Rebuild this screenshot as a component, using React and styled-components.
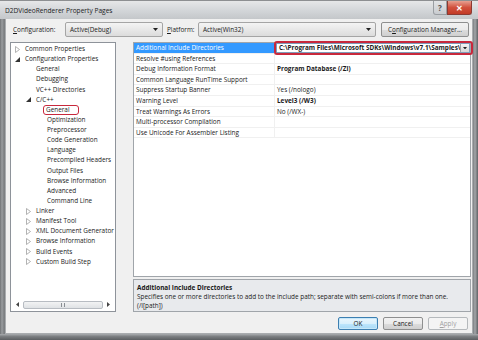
import React from 'react'
import styled, { createGlobalStyle, css } from 'styled-components'

const GlobalStyle = createGlobalStyle`
  html, body { margin: 0; padding: 0; background: #6e6e6e; }
  body { font-family: "Open Sans", "Noto Sans", "Liberation Sans", sans-serif; }
  * { box-sizing: border-box; }
`

const tree = [
  { label: 'Common Properties', level: 0, arrow: 'closed' },
  { label: 'Configuration Properties', level: 0, arrow: 'open' },
  { label: 'General', level: 1 },
  { label: 'Debugging', level: 1 },
  { label: 'VC++ Directories', level: 1 },
  { label: 'C/C++', level: 1, arrow: 'open' },
  { label: 'General', level: 2, marked: true },
  { label: 'Optimization', level: 2 },
  { label: 'Preprocessor', level: 2 },
  { label: 'Code Generation', level: 2 },
  { label: 'Language', level: 2 },
  { label: 'Precompiled Headers', level: 2 },
  { label: 'Output Files', level: 2 },
  { label: 'Browse Information', level: 2 },
  { label: 'Advanced', level: 2 },
  { label: 'Command Line', level: 2 },
  { label: 'Linker', level: 1, arrow: 'closed' },
  { label: 'Manifest Tool', level: 1, arrow: 'closed' },
  { label: 'XML Document Generator', level: 1, arrow: 'closed' },
  { label: 'Browse Information', level: 1, arrow: 'closed' },
  { label: 'Build Events', level: 1, arrow: 'closed' },
  { label: 'Custom Build Step', level: 1, arrow: 'closed' },
]

const props = [
  { name: 'Additional Include Directories', value: 'C:\\Program Files\\Microsoft SDKs\\Windows\\v7.1\\Samples\\', selected: true },
  { name: 'Resolve #using References', value: '' },
  { name: 'Debug Information Format', value: 'Program Database (/Zi)', bold: true },
  { name: 'Common Language RunTime Support', value: '' },
  { name: 'Suppress Startup Banner', value: 'Yes (/nologo)' },
  { name: 'Warning Level', value: 'Level3 (/W3)', bold: true },
  { name: 'Treat Warnings As Errors', value: 'No (/WX-)' },
  { name: 'Multi-processor Compilation', value: '' },
  { name: 'Use Unicode For Assembler Listing', value: '' },
]

const Window = styled.div`
  width: 478px;
  height: 340px;
  display: flex;
  flex-direction: column;
  background: linear-gradient(90deg, #6f7275 0, #9a9da0 2px, #7c7f82 4px, #7c7f82 calc(100% - 5px), #a3a6a9 calc(100% - 3px), #5f6265 100%);
  overflow: hidden;
  font-size: 6.4px;
  color: #1a1a1a;
`

const TitleBar = styled.div`
  height: 19px;
  flex: none;
  display: flex;
  align-items: center;
  padding: 0 6px 0 5px;
  background: linear-gradient(#e6e7e8, #d2d5d8 55%, #c4c7ca);
  border-top: 1px solid #8d8f91;
`

const Title = styled.div`
  flex: 1;
  font-size: 6.6px;
  color: #222;
`

const CaptionButtons = styled.div`
  display: flex;
  align-self: flex-start;
`

const CaptionButton = styled.div`
  width: ${p => (p.$close ? 25 : 14)}px;
  height: 14px;
  display: flex;
  align-items: center;
  justify-content: center;
  border: 1px solid ${p => (p.$close ? '#8b3a33' : '#9a9ea2')};
  border-top: none;
  border-radius: 0 0 ${p => (p.$close ? '3px 0' : '0 3px')};
  background: ${p =>
    p.$close ? 'linear-gradient(#e7a091, #d1503d 50%, #c23a26)' : 'linear-gradient(#e2e4e6, #c9ccd0)'};
  color: ${p => (p.$close ? '#fff' : '#555')};
  font-size: 8px;
  font-weight: bold;
`

const Body = styled.div`
  flex: 1;
  display: flex;
  flex-direction: column;
  background: #f0f0f0;
  margin: 0 5px;
  padding: 3px 3px 3px 4px;
  border: 1px solid #a9acaf;
  border-top: none;
`

const BottomFrame = styled.div`
  height: 6px;
  flex: none;
  background: linear-gradient(#a9acaf, #7c7f82 40%, #5c5f62);
`

const ConfigRow = styled.div`
  height: 15px;
  display: flex;
  align-items: center;
  flex: none;
`

const Label = styled.span`
  width: ${p => p.$w}px;
  padding-left: ${p => p.$pad || 0}px;
  flex: none;
  u { text-decoration: underline; }
`

const Combo = styled.div`
  width: ${p => p.$w}px;
  height: 15px;
  flex: none;
  display: flex;
  align-items: center;
  justify-content: space-between;
  padding: 0 4px;
  border: 1px solid #a5a5a5;
  border-radius: 2px;
  background: linear-gradient(#f4f4f4, #e8e8e8 50%, #dcdcdc);
`

const Button = styled.div`
  height: ${p => p.$h || 13}px;
  width: ${p => p.$w}px;
  flex: none;
  display: flex;
  align-items: center;
  justify-content: center;
  border: 1px solid #8e8f8f;
  border-radius: 2px;
  background: linear-gradient(#f2f2f2, #ebebeb 50%, #dddddd 51%, #cfcfcf);
  ${p => p.$default && css`
    border-color: #3c7fb1;
    background: linear-gradient(#eaf6fd, #d9f0fc 50%, #bee6fd 51%, #a7d9f5);
    box-shadow: inset 0 0 0 1px #c6e7f9;
  `}
  ${p => p.$disabled && css`
    border-color: #b5b9bc;
    background: #f4f4f4;
    color: #a0a0a0;
  `}
`

const Main = styled.div`
  flex: 1;
  display: flex;
  gap: 17px;
  margin-top: 5px;
  min-height: 0;
`

const TreePanel = styled.div`
  width: 106px;
  flex: none;
  display: flex;
  flex-direction: column;
  border: 1px solid #8e939a;
  background: #fff;
`

const TreeList = styled.div`
  flex: 1;
  padding-top: 1px;
  overflow: hidden;
`

const TreeItem = styled.div`
  height: 10.13px;
  line-height: 10.13px;
  display: flex;
  align-items: center;
  padding-left: ${p => 4 + p.$level * 11}px;
  white-space: nowrap;
`

const ArrowBox = styled.span`
  width: 9px;
  flex: none;
  display: flex;
  align-items: center;
`

const TreeText = styled.span`
  padding: 0 1px;
  ${p => p.$marked && css`
    outline: 1.5px solid #c8283c;
    border-radius: 2px;
    padding: 0 8px 0 2px;
    margin-left: -2px;
    line-height: 8px;
  `}
`

const HScroll = styled.div`
  height: 9px;
  margin: 0 2px 2px;
  display: flex;
  align-items: center;
`

const ScrollArrow = styled.div`
  width: 9px;
  display: flex;
  justify-content: center;
`

const ScrollTrack = styled.div`
  flex: 1;
  height: 8px;
  display: flex;
  justify-content: center;
  align-items: center;
  border: 1px solid #b7bcc2;
  border-radius: 2px;
  background: linear-gradient(#f2f3f4, #dfe2e5);
  margin: 0 1px;
`

const Grip = styled.span`
  width: 4px;
  height: 4px;
  border-left: 1px solid #8a8f94;
  border-right: 1px solid #8a8f94;
`

const RightCol = styled.div`
  flex: 1;
  display: flex;
  flex-direction: column;
  gap: 2px;
`

const Grid = styled.div`
  flex: 1;
  border: 1px solid #a0a5aa;
  background: #fff;
`

const Row = styled.div`
  height: 10.6px;
  display: flex;
  border-bottom: 1px solid #f0f0f0;
`

const NameCell = styled.div`
  width: 141px;
  flex: none;
  padding-left: 2px;
  line-height: 10px;
  white-space: nowrap;
  border-right: 1px solid #f0f0f0;
  ${p => p.$selected && css`
    background: #3399ff;
    color: #fff;
  `}
`

const ValueCell = styled.div`
  flex: 1;
  position: relative;
  padding-left: 2px;
  line-height: 10px;
  white-space: nowrap;
  font-weight: ${p => (p.$bold ? 700 : 400)};
`

const EditBox = styled.div`
  display: flex;
  align-items: center;
  justify-content: space-between;
  height: 10px;
  margin-left: -1px;
  padding-left: 2px;
  font-weight: 700;
  border: 1px solid #7f9db9;
  background: #fff;
  overflow: hidden;
`

const DropBtn = styled.span`
  width: 9px;
  height: 8px;
  flex: none;
  display: flex;
  align-items: center;
  justify-content: center;
  background: linear-gradient(#f4f4f4, #d6d6d6);
  border-left: 1px solid #a0a0a0;
`

const Annotation = styled.div`
  position: absolute;
  left: -1px;
  right: -3px;
  top: -2px;
  bottom: -2px;
  border: 2px solid #c8283c;
  border-radius: 3px;
  pointer-events: none;
`

const Description = styled.div`
  height: 33px;
  flex: none;
  border: 1px solid #a0a5aa;
  background: #e8eaed;
  padding: 3px 3px 0;
  line-height: 9px;
`

const DescTitle = styled.div`
  font-weight: 700;
`

const ButtonRow = styled.div`
  display: flex;
  justify-content: flex-end;
  gap: 5px;
  margin-top: 5px;
  padding-right: 1px;
  flex: none;
`

const Triangle = ({ open }) =>
  open ? (
    <svg width="5" height="5" viewBox="0 0 5 5"><path d="M5 0 L5 5 L0 5 Z" fill="#333" /></svg>
  ) : (
    <svg width="5" height="7" viewBox="0 0 5 7"><path d="M0.5 0.5 L4.5 3.5 L0.5 6.5 Z" fill="#fff" stroke="#a0a0a0" strokeWidth="0.8" /></svg>
  )

const DownArrow = ({ size = 5 }) => (
  <svg width={size} height={size / 2 + 0.5} viewBox="0 0 6 3.5"><path d="M0 0 L6 0 L3 3.5 Z" fill="#222" /></svg>
)

const SideArrow = ({ left }) => (
  <svg width="3" height="5" viewBox="0 0 3 5">
    <path d={left ? 'M3 0 L0 2.5 L3 5 Z' : 'M0 0 L3 2.5 L0 5 Z'} fill="#444" />
  </svg>
)

export default function App() {
  return (
    <>
      <GlobalStyle />
      <Window>
        <TitleBar>
          <Title>D2DVideoRenderer Property Pages</Title>
          <CaptionButtons>
            <CaptionButton>?</CaptionButton>
            <CaptionButton $close>✕</CaptionButton>
          </CaptionButtons>
        </TitleBar>
        <Body>
          <ConfigRow>
            <Label $w={55} $pad={3}><u>C</u>onfiguration:</Label>
            <Combo $w={98}>Active(Debug)<DownArrow /></Combo>
            <Label $w={35} $pad={4}><u>P</u>latform:</Label>
            <Combo $w={178}>Active(Win32)<DownArrow /></Combo>
            <span style={{ flex: 1 }} />
            <Button $w={88} $h={15}>C<u>o</u>nfiguration Manager...</Button>
          </ConfigRow>
          <Main>
            <TreePanel>
              <TreeList>
                {tree.map((t, i) => (
                  <TreeItem key={i} $level={t.level}>
                    <ArrowBox>{t.arrow && <Triangle open={t.arrow === 'open'} />}</ArrowBox>
                    <TreeText $marked={t.marked}>{t.label}</TreeText>
                  </TreeItem>
                ))}
              </TreeList>
              <HScroll>
                <ScrollArrow><SideArrow left /></ScrollArrow>
                <ScrollTrack><Grip /></ScrollTrack>
                <ScrollArrow><SideArrow /></ScrollArrow>
              </HScroll>
            </TreePanel>
            <RightCol>
              <Grid>
                {props.map((p, i) => (
                  <Row key={i}>
                    <NameCell $selected={p.selected}>{p.name}</NameCell>
                    <ValueCell $bold={p.bold}>
                      {p.selected ? (
                        <>
                          <EditBox>{p.value}<DropBtn><DownArrow size={4} /></DropBtn></EditBox>
                          <Annotation />
                        </>
                      ) : p.value}
                    </ValueCell>
                  </Row>
                ))}
              </Grid>
              <Description>
                <DescTitle>Additional Include Directories</DescTitle>
                <div>Specifies one or more directories to add to the include path; separate with semi-colons if more than one.</div>
                <div>(/I[path])</div>
              </Description>
            </RightCol>
          </Main>
          <ButtonRow>
            <Button $w={40} $default>OK</Button>
            <Button $w={40}>Cancel</Button>
            <Button $w={40} $disabled><u>A</u>pply</Button>
          </ButtonRow>
        </Body>
        <BottomFrame />
      </Window>
    </>
  )
}
